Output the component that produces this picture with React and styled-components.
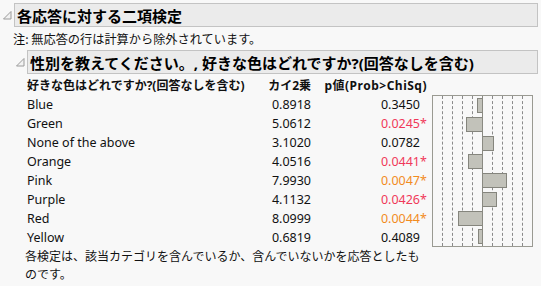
import React from "react";
import styled, { createGlobalStyle } from "styled-components";

const rows = [
  { name: "Blue", chi: "0.8918", p: "0.3450", level: 0, bar: -5 },
  { name: "Green", chi: "5.0612", p: "0.0245", level: 1, bar: -16 },
  { name: "None of the above", chi: "3.1020", p: "0.0782", level: 0, bar: 11 },
  { name: "Orange", chi: "4.0516", p: "0.0441", level: 1, bar: -14 },
  { name: "Pink", chi: "7.9930", p: "0.0047", level: 2, bar: 24 },
  { name: "Purple", chi: "4.1132", p: "0.0426", level: 1, bar: 14 },
  { name: "Red", chi: "8.0999", p: "0.0044", level: 2, bar: -24 },
  { name: "Yellow", chi: "0.6819", p: "0.4089", level: 0, bar: -4 }
];

const levelColors = ["#111111", "#f0385a", "#f28c1e"];
const gridLines = [-40, -30, -20, -10, 10, 20, 30, 40];

const GlobalStyle = createGlobalStyle`
  html, body {
    margin: 0;
    padding: 0;
    background: #f8f8f8;
  }
  body {
    font-family: "Noto Sans", "Noto Sans CJK JP", sans-serif;
    font-size: 12px;
    color: #111;
  }
`;

const Page = styled.div`
  width: 541px;
  height: 286px;
  overflow: hidden;
  padding: 3px 0 0 3px;
  box-sizing: border-box;
`;

const Outline = styled.div`
  display: flex;
  flex-direction: column;
`;

const OutlineHead = styled.div`
  display: flex;
  align-items: center;
  gap: 2px;
`;

const Disclosure = styled.svg`
  width: 9px;
  height: 9px;
  flex: none;
  margin-top: 1px;
`;

const TitleBox = styled.div`
  flex: 1;
  height: 24px;
  box-sizing: border-box;
  margin-right: 3px;
  background: #ebebeb;
  border: 1px solid #c3c3c3;
  padding-left: 2px;
  display: flex;
  align-items: center;
  font-family: "Noto Sans", "Noto Sans CJK JP", sans-serif;
  font-weight: 700;
  font-size: 15px;
  color: #000;
  white-space: nowrap;
`;

const Note = styled.div`
  font-family: "Noto Sans CJK JP", sans-serif;
  font-size: 12.2px;
  line-height: 16px;
  margin: 4px 0 3px 10px;
`;

const Body = styled.div`
  padding-left: ${(p) => p.$indent}px;
  display: flex;
  flex-direction: column;
`;

const Table = styled.div`
  display: grid;
  grid-template-columns: 232px 52px 109px 7px 106px;
  grid-template-rows: 20px repeat(8, 19px);
  margin-top: 1px;
  margin-left: 11px;
`;

const HeadCell = styled.div`
  font-family: "Noto Sans", "Noto Sans CJK JP", sans-serif;
  font-weight: 700;
  font-size: 12px;
  letter-spacing: ${(p) => (p.$wide ? "0.5px" : "normal")};
  display: flex;
  align-items: center;
  justify-content: ${(p) => (p.$right ? "flex-end" : "flex-start")};
  white-space: nowrap;
  grid-column: ${(p) => p.$span || "auto"};
`;

const Cell = styled.div`
  display: flex;
  align-items: center;
  justify-content: ${(p) => (p.$right ? "flex-end" : "flex-start")};
  font-size: 12.5px;
  color: ${(p) => p.$color || "#111"};
  white-space: nowrap;
`;

const Chart = styled.div`
  grid-column: 5;
  grid-row: 2 / span 8;
  margin-left: 5px;
  position: relative;
  border: 1px solid #9a9a92;
  box-sizing: border-box;
  display: grid;
  grid-template-rows: repeat(8, 1fr);
`;

const GridLine = styled.div`
  position: absolute;
  top: 0;
  bottom: 0;
  width: 0;
  border-left: 1px ${(p) => (p.$solid ? "solid #8a8a82" : "dashed #8a8a8a")};
`;

const BarRow = styled.div`
  position: relative;
`;

const Bar = styled.div`
  position: absolute;
  top: 2px;
  height: 15px;
  box-sizing: border-box;
  background: #c2c2ba;
  border: 1px solid #85857d;
`;

const Footer = styled.div`
  font-family: "Noto Sans CJK JP", sans-serif;
  font-size: 12px;
  line-height: 18px;
  width: 405px;
  margin: 0 0 0 9px;
`;

const Triangle = () => (
  <Disclosure viewBox="0 0 9 9">
    <polygon points="8,0.5 8,8 0.5,8" fill="#f2f2f2" stroke="#9a9a9a" strokeWidth="1" />
  </Disclosure>
);

const CENTER = 50;

export default function App() {
  return (
    <Page>
      <GlobalStyle />
      <Outline>
        <OutlineHead>
          <Triangle />
          <TitleBox>各応答に対する二項検定</TitleBox>
        </OutlineHead>
        <Note>注: 無応答の行は計算から除外されています。</Note>
        <Body $indent={13}>
          <Outline>
            <OutlineHead>
              <Triangle />
              <TitleBox>性別を教えてください。, 好きな色はどれですか?(回答なしを含む)</TitleBox>
            </OutlineHead>
            <Table>
              <HeadCell>好きな色はどれですか?(回答なしを含む)</HeadCell>
              <HeadCell $right>カイ2乗</HeadCell>
              <HeadCell $right $wide $span="span 2">p値(Prob&gt;ChiSq)</HeadCell>
              <div />
              {rows.map((r) => (
                <React.Fragment key={r.name}>
                  <Cell>{r.name}</Cell>
                  <Cell $right>{r.chi}</Cell>
                  <Cell $right $color={levelColors[r.level]}>{r.p}</Cell>
                  <Cell $color={levelColors[r.level]}>{r.level ? "*" : ""}</Cell>
                </React.Fragment>
              ))}
              <Chart>
                {gridLines.map((g) => (
                  <GridLine key={g} style={{ left: CENTER + g - 1 }} />
                ))}
                {rows.map((r) => (
                  <BarRow key={r.name}>
                    <Bar
                      style={{
                        left: r.bar < 0 ? CENTER + r.bar - 1 : CENTER - 1,
                        width: Math.abs(r.bar) + 1
                      }}
                    />
                  </BarRow>
                ))}
                <GridLine $solid style={{ left: CENTER - 1 }} />
              </Chart>
            </Table>
            <Footer>
              各検定は、該当カテゴリを含んでいるか、含んでいないかを応答としたものです。
            </Footer>
          </Outline>
        </Body>
      </Outline>
    </Page>
  );
}
